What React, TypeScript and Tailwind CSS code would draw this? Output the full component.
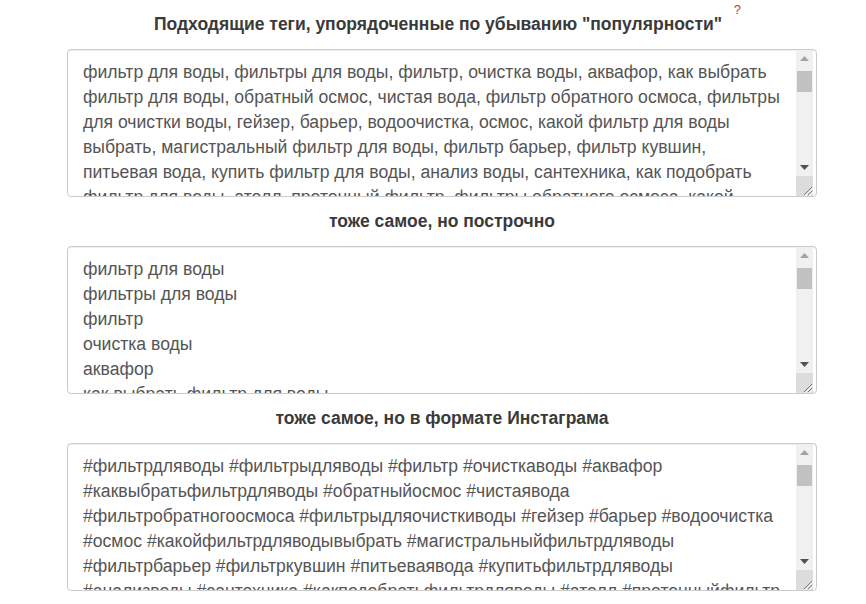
import React from "react";

const box1 = [
  "фильтр для воды, фильтры для воды, фильтр, очистка воды, аквафор, как выбрать",
  "фильтр для воды, обратный осмос, чистая вода, фильтр обратного осмоса, фильтры",
  "для очистки воды, гейзер, барьер, водоочистка, осмос, какой фильтр для воды",
  "выбрать, магистральный фильтр для воды, фильтр барьер, фильтр кувшин,",
  "питьевая вода, купить фильтр для воды, анализ воды, сантехника, как подобрать",
  "фильтр для воды, атолл, протонный фильтр, фильтры обратного осмоса, какой",
];

const box2 = [
  "фильтр для воды",
  "фильтры для воды",
  "фильтр",
  "очистка воды",
  "аквафор",
  "как выбрать фильтр для воды",
];

const box3 = [
  "#фильтрдляводы #фильтрыдляводы #фильтр #очисткаводы #аквафор",
  "#каквыбратьфильтрдляводы #обратныйосмос #чистаявода",
  "#фильтробратногоосмоса #фильтрыдляочисткиводы #гейзер #барьер #водоочистка",
  "#осмос #какойфильтрдляводывыбрать #магистральныйфильтрдляводы",
  "#фильтрбарьер #фильтркувшин #питьеваявода #купитьфильтрдляводы",
  "#анализводы #сантехника #какподобратьфильтрдляводы #атолл #протонныйфильтр",
];

function Scrollbar() {
  return (
    <div className="absolute right-[3px] top-0 bottom-0 w-[17px] bg-[#f0f0f0] flex flex-col">
      <div className="h-[17px] flex items-center justify-center">
        <svg width="9" height="5" viewBox="0 0 9 5">
          <path d="M0 5 L4.5 0 L9 5 Z" fill="#a3a3a3" />
        </svg>
      </div>
      <div className="h-[4px]" />
      <div className="mx-[1px] h-[21px] bg-[#c1c1c1]" />
      <div className="flex-1" />
      <div className="h-[17px] flex items-center justify-center">
        <svg width="9" height="5" viewBox="0 0 9 5">
          <path d="M0 0 L9 0 L4.5 5 Z" fill="#505050" />
        </svg>
      </div>
      <div className="h-[20px] bg-[#dcdcdc] relative">
        <svg className="absolute right-0 bottom-0" width="12" height="12" viewBox="0 0 12 12">
          <path d="M11 3 L3 11 M11 7 L7 11" stroke="#7a7a7a" strokeWidth="1" />
          <path d="M12 4 L4 12 M12 8 L8 12" stroke="#ffffff" strokeWidth="1" />
        </svg>
      </div>
    </div>
  );
}

function TextBox({ lines }: { lines: string[] }) {
  return (
    <div className="relative h-[148px] w-[750px] overflow-hidden rounded-[4px] border border-[#cccccc] bg-white shadow-[inset_0_1px_1px_rgba(0,0,0,0.075)]">
      <div className="pl-[15px] pt-[10px] text-[17.6px] leading-[25px] text-[#555555]">
        {lines.map((l, i) => (
          <div key={i} className="whitespace-nowrap">
            {l}
          </div>
        ))}
      </div>
      <Scrollbar />
    </div>
  );
}

function Heading({ children }: { children: React.ReactNode }) {
  return (
    <div className="h-[49px] flex items-center justify-center text-[17.5px] font-bold text-[#3a3a3a]">
      {children}
    </div>
  );
}

export default function App() {
  return (
    <div
      className="min-h-[604px] w-[866px] bg-white"
      style={{ fontFamily: '"Liberation Sans", Arial, sans-serif' }}
    >
      <div className="ml-[67px] w-[750px] flex flex-col">
        <Heading>
          <span className="relative pr-[8px]">
            Подходящие теги, упорядоченные по убыванию "популярности"
            <span className="absolute -right-[11px] -top-[11px] text-[13px] font-normal text-[#c9302c]">
              ?
            </span>
          </span>
        </Heading>
        <TextBox lines={box1} />
        <Heading>тоже самое, но построчно</Heading>
        <TextBox lines={box2} />
        <Heading>тоже самое, но в формате Инстаграма</Heading>
        <TextBox lines={box3} />
      </div>
    </div>
  );
}
